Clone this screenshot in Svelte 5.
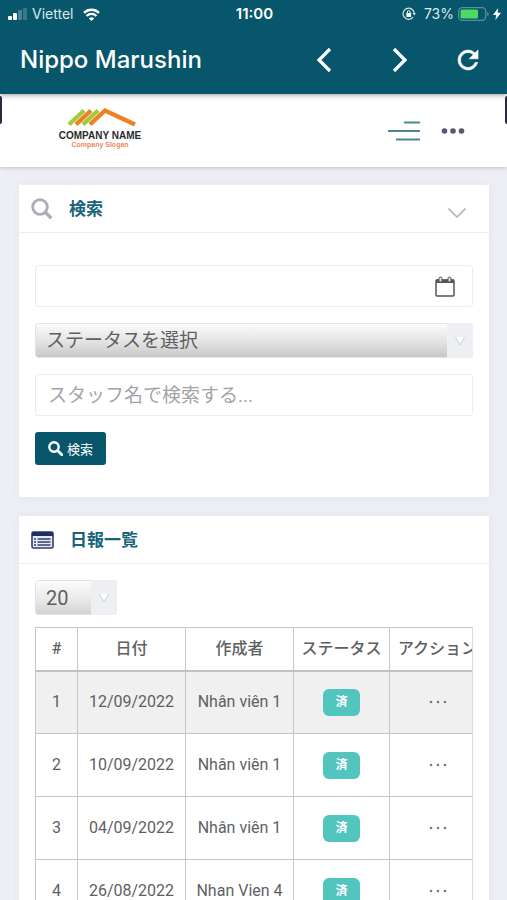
<script lang="ts">
type Report = {
	id: number;
	date: string;
	author: string;
	status: string;
};

const columns = [
	{ key: "index", label: "#" },
	{ key: "date", label: "日付" },
	{ key: "author", label: "作成者" },
	{ key: "status", label: "ステータス" },
	{ key: "action", label: "アクション" },
];

const reports: Report[] = [
	{ id: 1, date: "12/09/2022", author: "Nhân viên 1", status: "済" },
	{ id: 2, date: "10/09/2022", author: "Nhân viên 1", status: "済" },
	{ id: 3, date: "04/09/2022", author: "Nhân viên 1", status: "済" },
	{ id: 4, date: "26/08/2022", author: "Nhan Vien 4", status: "済" },
];

let searchOpen = $state(true);
let date = $state("");
let status = $state("");
let staff = $state("");
let pageSize = $state("20");
</script>

<div class="app">
	<header class="app-header">
		<div class="status-bar">
			<div class="status-left">
				<svg width="20" height="12" viewBox="0 0 20 12" aria-hidden="true">
					<rect x="0" y="8" width="4" height="4" rx="1" fill="#fff" />
					<rect x="5" y="5" width="4" height="7" rx="1" fill="#fff" />
					<rect x="10" y="2" width="4" height="10" rx="1" fill="#4a8493" />
					<rect x="15" y="0" width="4" height="12" rx="1" fill="#3a7888" />
				</svg>
				<span>Viettel</span>
				<svg class="wifi" width="17" height="13" viewBox="0 0 17 13" aria-hidden="true">
					<g fill="none" stroke="#fff" stroke-width="2.4">
						<path d="M1 4.8a10.8 10.8 0 0 1 15 0" />
						<path d="M3.600 8a6.800 6.800 0 0 1 9.800 0" />
					</g>
					<path d="M5.800 10.400a4 4 0 0 1 5.400 0L8.500 13z" fill="#fff" />
				</svg>
			</div>
			<strong class="clock">11:00</strong>
			<div class="status-right">
				<svg width="14" height="14" viewBox="0 0 14 14" aria-hidden="true">
					<path
						d="M12.200 6A5.600 5.600 0 1 0 11.200 10"
						fill="none"
						stroke="#d8e6ea"
						stroke-width="1.200"
					/>
					<path d="M10.500 6h3.400l-1.700 2.400z" fill="#d8e6ea" />
					<rect x="4.300" y="6" width="4.800" height="4" rx=".5" fill="#fff" />
					<path d="M5.300 6V5a1.400 1.400 0 0 1 2.800 0v1" fill="none" stroke="#fff" />
				</svg>
				<span>73%</span>
				<svg class="battery" width="31" height="14" viewBox="0 0 31 14" aria-hidden="true">
					<rect x=".7" y=".7" width="27" height="12.600" rx="3.500" fill="none" stroke="#5a909d" stroke-width="1.300" />
					<path d="M29.200 4.800v4.400q1.600-.8 1.600-2.200t-1.600-2.200z" fill="#5a909d" />
					<rect x="2.500" y="2.500" width="17.500" height="9" rx="1.500" fill="#4cd964" />
				</svg>
				<svg width="8" height="12" viewBox="0 0 8 12" aria-hidden="true">
					<path d="M5.200 0L0 7h3.200L2.400 12 8 4.800H4.600z" fill="#fff" />
				</svg>
			</div>
		</div>

		<div class="title-bar">
			<h1>Nippo Marushin</h1>
			<nav>
				<button type="button" class="nav-btn" aria-label="戻る">
					<svg width="16" height="26" viewBox="0 0 16 26">
						<path d="M14 2L3 13l11 11" fill="none" stroke="currentColor" stroke-width="3.200" />
					</svg>
				</button>
				<button type="button" class="nav-btn" aria-label="進む">
					<svg width="16" height="26" viewBox="0 0 16 26">
						<path d="M2 2l11 11L2 24" fill="none" stroke="currentColor" stroke-width="3.200" />
					</svg>
				</button>
				<button type="button" class="nav-btn reload" aria-label="再読み込み">
					<svg width="30" height="30" viewBox="0 0 24 24">
						<path
							d="M17.650 6.350A7.958 7.958 0 0 0 12 4a8 8 0 1 0 7.730 10h-2.080A6 6 0 1 1 12 6c1.660 0 3.140.69 4.220 1.780L13 11h7V4z"
							fill="currentColor"
							stroke="currentColor"
							stroke-width=".5"
						/>
					</svg>
				</button>
			</nav>
		</div>
	</header>

	<div class="content">
		<span class="edge edge-left"></span>
		<span class="edge edge-right"></span>

		<div class="brand-bar">
			<a class="logo" href="#top">
				<svg width="84" height="20" viewBox="0 0 84 20" aria-hidden="true">
					<g fill="none" stroke-width="4.400">
						<path d="M11 17.500L26 3.500" stroke="#a5c93a" />
						<path d="M18 17.500L33 3.500" stroke="#ef8023" />
						<path d="M25 17.500L40 3.500" stroke="#a5c93a" />
						<path d="M32 17.500L47 3.500l30 14" stroke="#ef8023" />
					</g>
				</svg>
				<span class="logo-name">COMPANY NAME</span>
				<span class="logo-slogan">Company Slogan</span>
			</a>
			<div class="brand-actions">
				<button type="button" class="icon-btn" aria-label="メニュー">
					<svg width="32" height="20" viewBox="0 0 32 20">
						<path d="M16 1.500h16M0 10h32M8 18.500h24" stroke="#4c8791" stroke-width="1.800" />
					</svg>
				</button>
				<button type="button" class="icon-btn" aria-label="その他">
					<svg width="24" height="6" viewBox="0 0 24 6" fill="#5f5470">
						<circle cx="3.500" cy="3" r="2.800" />
						<circle cx="12" cy="3" r="2.800" />
						<circle cx="20.500" cy="3" r="2.800" />
					</svg>
				</button>
			</div>
		</div>

		<main>
			<section class="panel">
				<div class="panel-head">
					<svg width="22" height="22" viewBox="0 0 22 22" aria-hidden="true">
						<circle cx="9" cy="9" r="7.300" fill="none" stroke="#b0aabd" stroke-width="2.800" />
						<path d="M14.300 14.300l6 6" stroke="#b0aabd" stroke-width="3.400" />
					</svg>
					<h2>検索</h2>
					<button
						type="button"
						class="icon-btn toggle"
						class:closed={!searchOpen}
						aria-label="開閉"
						aria-expanded={searchOpen}
						onclick={() => (searchOpen = !searchOpen)}
					>
						<svg width="18" height="10" viewBox="0 0 18 10">
							<path d="M.5.5L9 9l8.500-8.500" fill="none" stroke="#b5b5bb" stroke-width="1.600" />
						</svg>
					</button>
				</div>

				{#if searchOpen}
					<form class="search-form" onsubmit={(e) => e.preventDefault()}>
						<div class="field date-field">
							<input type="text" aria-label="日付" bind:value={date} />
							<button type="button" class="icon-btn" aria-label="カレンダー">
								<svg width="20" height="21" viewBox="0 0 20 21">
									<rect x="1" y="4" width="18" height="16" rx="1" fill="none" stroke="#55555a" stroke-width="1.500" />
									<path d="M1 3.500h18V7H1z" fill="#55555a" />
									<rect x="4" y="1" width="3" height="5" rx="1.500" fill="#ddd" stroke="#55555a" />
									<rect x="13" y="1" width="3" height="5" rx="1.500" fill="#ddd" stroke="#55555a" />
								</svg>
							</button>
						</div>
						<div class="select">
							<select aria-label="ステータス" bind:value={status}>
								<option value="">ステータスを選択</option>
								<option value="done">済</option>
							</select>
							<span class="select-arrow">
								<svg width="10" height="10" viewBox="0 0 10 10" aria-hidden="true">
									<path d="M.5 1h9L5 9z" fill="#fff" />
									<path d="M.5 1L5 9l4.500-8" fill="none" stroke="#cfd0d4" />
								</svg>
							</span>
						</div>
						<div class="field">
							<input type="text" aria-label="スタッフ名" placeholder="スタッフ名で検索する..." bind:value={staff} />
						</div>
						<button type="submit" class="submit-btn">
							<svg width="15" height="15" viewBox="0 0 15 15" aria-hidden="true">
								<circle cx="6" cy="6" r="4.700" fill="none" stroke="#fff" stroke-width="2.400" />
								<path d="M9.500 9.500l4.300 4.300" stroke="#fff" stroke-width="2.800" stroke-linecap="round" />
							</svg>
							検索
						</button>
					</form>
				{/if}
			</section>

			<section class="panel">
				<div class="panel-head">
					<svg width="23" height="18" viewBox="0 0 23 18" aria-hidden="true">
						<rect x="1" y="1" width="21" height="16" rx="1.500" fill="#e8ebf4" stroke="#2e3d6e" stroke-width="1.600" />
						<path d="M1 1h21v4H1z" fill="#1f2f63" />
						<path d="M6.500 8h13M6.500 11h13M6.500 14h13" stroke="#2e3d6e" stroke-width="1.400" />
						<path d="M3 8h2M3 11h2M3 14h2" stroke="#2e3d6e" stroke-width="1.400" />
					</svg>
					<h2>日報一覧</h2>
				</div>

				<div class="list-body">
					<div class="select page-size">
						<select aria-label="表示件数" bind:value={pageSize}>
							<option>20</option>
							<option>50</option>
							<option>100</option>
						</select>
						<span class="select-arrow">
							<svg width="10" height="10" viewBox="0 0 10 10" aria-hidden="true">
								<path d="M.5 1h9L5 9z" fill="#fff" />
								<path d="M.5 1L5 9l4.500-8" fill="none" stroke="#cfd0d4" />
							</svg>
						</span>
					</div>

					<div class="table-wrap">
						<table>
							<thead>
								<tr>
									{#each columns as column}
										<th class={column.key}>{column.label}</th>
									{/each}
								</tr>
							</thead>
							<tbody>
								{#each reports as report (report.id)}
									<tr>
										<td>{report.id}</td>
										<td>{report.date}</td>
										<td>{report.author}</td>
										<td><span class="badge">{report.status}</span></td>
										<td>
											<button type="button" class="icon-btn row-menu" aria-label="操作">
												<svg width="18" height="4" viewBox="0 0 18 4" fill="#77777c">
													<circle cx="2" cy="2" r="1.300" />
													<circle cx="9" cy="2" r="1.300" />
													<circle cx="16" cy="2" r="1.300" />
												</svg>
											</button>
										</td>
									</tr>
								{/each}
							</tbody>
						</table>
					</div>
				</div>
			</section>
		</main>
	</div>
</div>

<style>
	:global(body) {
		margin: 0;
	}

	.app {
		display: flex;
		flex-direction: column;
		height: 100vh;
		overflow: hidden;
		background: #eeeff4;
		color: #5f5f63;
		font-family: Roboto, "Noto Sans CJK JP", sans-serif;
	}

	button,
	input,
	select {
		box-sizing: border-box;
		margin: 0;
		font: inherit;
		color: inherit;
	}

	svg {
		display: block;
		flex: none;
	}

	.app-header {
		position: relative;
		z-index: 1;
		flex: none;
		background: #07566b;
		color: #fff;
		font-family: Inter, sans-serif;
		box-shadow: 0 1px 5px rgba(0, 0, 0, 0.4);
	}

	.status-bar {
		display: grid;
		grid-template-columns: 1fr auto 1fr;
		align-items: center;
		height: 28px;
		padding: 0 6px 0 8px;
		font-size: 14px;
		line-height: 20px;
	}

	.status-left,
	.status-right {
		display: flex;
		align-items: center;
		gap: 4px;
		color: #dce9ec;
	}

	.status-right {
		justify-content: flex-end;
	}

	.wifi {
		margin-left: 6px;
	}

	.status-right span {
		margin-left: 4px;
	}

	.clock {
		font-size: 15px;
		font-weight: 600;
	}

	.title-bar {
		display: flex;
		align-items: center;
		justify-content: space-between;
		height: 64px;
		padding: 0 9px 2px 20px;
	}

	h1 {
		margin: 0;
		font-size: 24px;
		font-weight: 500;
		line-height: 32px;
	}

	nav {
		display: flex;
	}

	.nav-btn {
		display: flex;
		align-items: center;
		justify-content: center;
		width: 76px;
		height: 48px;
		padding: 0;
		border: 0;
		background: none;
		cursor: pointer;
	}

	.nav-btn.reload {
		width: 60px;
	}

	.icon-btn {
		display: flex;
		align-items: center;
		justify-content: center;
		padding: 0;
		border: 0;
		background: none;
		cursor: pointer;
	}

	.content {
		position: relative;
		flex: 1;
		overflow-y: auto;
		scrollbar-width: none;
	}

	.edge {
		position: absolute;
		top: 2px;
		width: 2px;
		height: 28px;
		background: #2c2a3f;
	}

	.edge-left {
		left: 0;
		border-radius: 0 2px 2px 0;
	}

	.edge-right {
		right: 0;
		border-radius: 2px 0 0 2px;
	}

	.brand-bar {
		display: flex;
		align-items: center;
		justify-content: space-between;
		height: 73px;
		padding: 0 42px 0 58px;
		background: #fff;
		box-shadow: 0 1px 4px rgba(60, 60, 80, 0.25);
	}

	.logo {
		display: flex;
		flex-direction: column;
		align-items: center;
		padding-bottom: 6px;
		font-family: "Liberation Sans", sans-serif;
		font-weight: 700;
		text-decoration: none;
	}

	.logo-name {
		margin-top: 3px;
		color: #2b2b2b;
		font-size: 10px;
		line-height: 11px;
	}

	.logo-slogan {
		color: #ee8a5c;
		font-size: 7px;
		line-height: 7px;
	}

	.brand-actions {
		display: flex;
		gap: 21px;
	}

	main {
		display: flex;
		flex-direction: column;
		gap: 19px;
		padding: 18px 18px 18px 19px;
	}

	.panel {
		background: #fff;
		box-shadow: 0 0 8px rgba(70, 60, 110, 0.06);
	}

	.panel-head {
		display: flex;
		align-items: center;
		gap: 16px;
		height: 47px;
		padding: 0 23px 0 12px;
		border-bottom: 1px solid #ebecf0;
	}

	h2 {
		margin: 0;
		color: #17647a;
		font-size: 17px;
		font-weight: 700;
		line-height: 24px;
	}

	.toggle {
		height: 40px;
		margin-left: auto;
		padding-top: 8px;
	}

	.toggle.closed svg {
		transform: rotate(180deg);
	}

	.search-form {
		display: grid;
		gap: 16px;
		padding: 32px 16px;
	}

	.field {
		display: flex;
		align-items: center;
		box-sizing: border-box;
		height: 42px;
		border: 1px solid #ebecef;
		border-radius: 3px;
		background: #fff;
	}

	.field input {
		flex: 1;
		min-width: 0;
		height: 100%;
		padding: 0 12px;
		border: 0;
		outline: none;
		background: none;
		font-size: 19px;
	}

	.field input::placeholder {
		color: #a3a3a8;
	}

	.date-field {
		padding-right: 17px;
	}

	.select {
		display: grid;
		grid-template-columns: 1fr 26px;
		height: 35px;
		overflow: hidden;
		border-radius: 3px;
	}

	.select select {
		grid-area: 1 / 1 / 2 / 3;
		width: 100%;
		padding: 0 36px 0 10px;
		border: 1px solid #e3e3e6;
		border-radius: 3px;
		outline: none;
		appearance: none;
		background: linear-gradient(#fbfbfb, #e0e0e0 60%, #c8c8c8);
		font-size: 19px;
	}

	.select-arrow {
		grid-area: 1 / 2;
		z-index: 1;
		display: flex;
		align-items: center;
		justify-content: center;
		background: #eeeff3;
		pointer-events: none;
	}

	.page-size {
		width: 82px;
		margin-bottom: 12px;
	}

	.page-size select {
		background: linear-gradient(#fbfbfb, #e8e8e8 60%, #d2d2d2);
		font-size: 20px;
	}

	.submit-btn {
		display: flex;
		align-items: center;
		justify-self: start;
		gap: 4px;
		height: 33px;
		padding: 0 13px;
		border: 0;
		border-radius: 3px;
		background: #07566b;
		color: #fff;
		font-size: 13px;
		cursor: pointer;
	}

	.list-body {
		padding: 16px;
	}

	.table-wrap {
		overflow-x: auto;
		scrollbar-width: none;
		border-right: 1px solid #dcdcde;
	}

	table {
		width: 100%;
		min-width: 450px;
		table-layout: fixed;
		border-collapse: collapse;
		font-size: 16px;
		line-height: 24px;
		text-align: center;
	}

	th,
	td {
		box-sizing: border-box;
		padding: 0;
		border: 1px solid #c6c6c8;
		white-space: nowrap;
	}

	th {
		height: 43px;
		border-bottom: 2px solid #c2c2c4;
		font-weight: 500;
	}

	td {
		height: 63px;
	}

	.index {
		width: 42px;
	}

	.date,
	.author {
		width: 108px;
	}

	.status,
	.action {
		width: 96px;
	}

	tbody tr:nth-child(4n + 1) {
		background: #f0f0f0;
	}

	.badge {
		display: inline-block;
		width: 37px;
		border-radius: 6px;
		background: #52c5bf;
		color: #fff;
		font-size: 12px;
		font-weight: 700;
		line-height: 27px;
		vertical-align: middle;
	}

	.row-menu {
		width: 100%;
		height: 24px;
	}
</style>
